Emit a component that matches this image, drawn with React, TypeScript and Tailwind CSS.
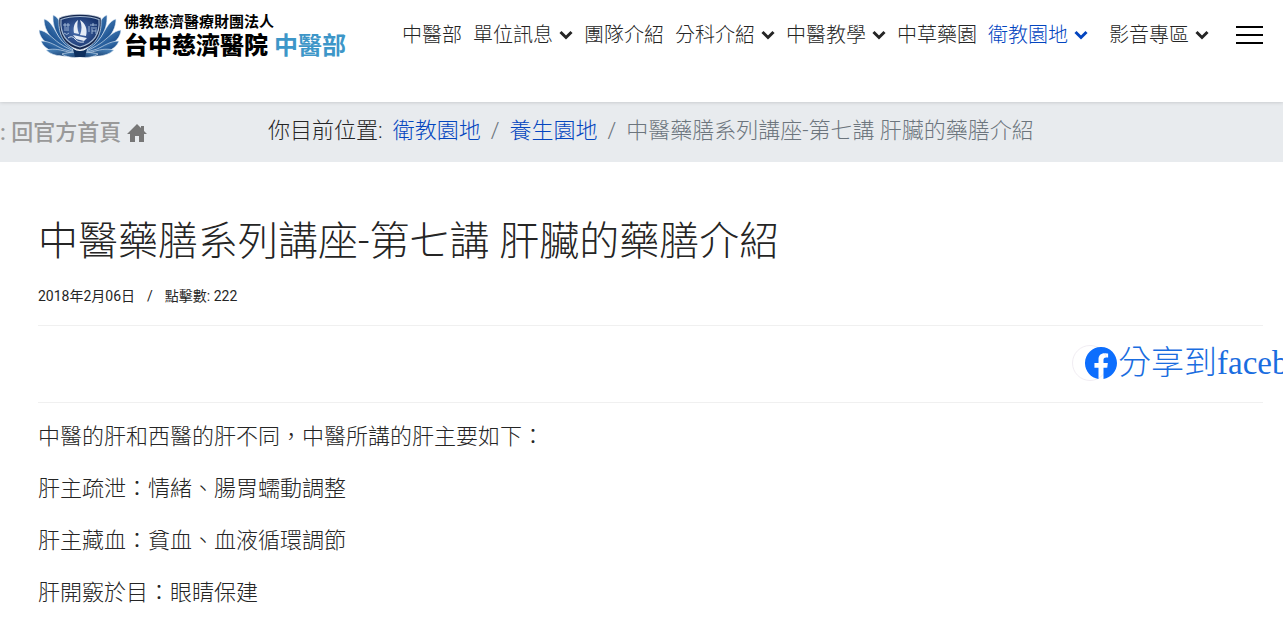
import { BsFacebook } from "react-icons/bs";

const navItems = [
  { label: "中醫部" },
  { label: "單位訊息", menu: true },
  { label: "團隊介紹" },
  { label: "分科介紹", menu: true },
  { label: "中醫教學", menu: true },
  { label: "中草藥園" },
  { label: "衛教園地", menu: true, active: true },
  { label: "影音專區", menu: true, last: true },
];

const paragraphs = [
  "中醫的肝和西醫的肝不同，中醫所講的肝主要如下：",
  "肝主疏泄：情緒、腸胃蠕動調整",
  "肝主藏血：貧血、血液循環調節",
  "肝開竅於目：眼睛保建",
];

function Chevron() {
  return (
    <svg viewBox="0 0 14 14" className="size-[14px]" fill="none" stroke="currentColor" strokeWidth="3" aria-hidden="true">
      <path d="M1.500 4 L7 9.500 L12.500 4" />
    </svg>
  );
}

function Petals() {
  return (
    <g stroke="#e4eef8" strokeWidth="0.6">
      <path d="M34 40 C24 33 13 20 14 3 C21 6 23 14 23 22 C26 29 31 34 36 38Z" fill="url(#petal)" />
      <path d="M35 40 C20 35 5 23 5 7 C12 9 15 17 20 25 C24 31 30 36 36 39Z" fill="url(#petal)" />
      <path d="M36 41 C20 40 1 32 0 18 C8 19 13 26 20 31 C26 35 32 38 37 40Z" fill="url(#petal)" />
      <path d="M38 42 C24 44 6 40 2 29 C11 29 17 34 24 37 C30 39 35 40 39 41Z" fill="url(#petal)" />
      <path d="M41 42 C31 45 15 46 7 38 C16 36 22 38 29 40 C34 41 38 41 41 42Z" fill="url(#petalDark)" />
      <path d="M41 45 C34 46 27 45 23 42 C30 40 37 40 41 41Z" fill="url(#petalDark)" />
    </g>
  );
}

function Emblem() {
  return (
    <svg viewBox="0 0 82 46" className="h-[46px] w-[82px] shrink-0" aria-hidden="true">
      <defs>
        <linearGradient id="petal" x1="0" y1="1" x2="0.8" y2="0.2">
          <stop offset="0" stopColor="#123a72" />
          <stop offset="0.5" stopColor="#245a98" />
          <stop offset="1" stopColor="#5b94c8" />
        </linearGradient>
        <linearGradient id="petalDark" x1="0" y1="0" x2="1" y2="1">
          <stop offset="0" stopColor="#4f8cc4" />
          <stop offset="1" stopColor="#0e2f5e" />
        </linearGradient>
        <radialGradient id="shield" cx="0.45" cy="0.5" r="0.6">
          <stop offset="0" stopColor="#4a70b0" />
          <stop offset="1" stopColor="#15316a" />
        </radialGradient>
      </defs>
      <Petals />
      <g transform="translate(82 0) scale(-1 1)">
        <Petals />
      </g>
      <path d="M34 37 Q41 41 48 37 L46 45 H36Z" fill="#0e2f5e" />
      <path d="M20 6 C30 1 52 1 62 6 C63 20 59 34 41 38 C23 34 19 20 20 6Z" fill="#14264d" stroke="#e4eef8" strokeWidth="0.7" />
      <path d="M22 7.500 C32 3.500 50 3.500 60 7.500 C61 20 56 31 41 35 C26 31 21 20 22 7.500Z" fill="url(#shield)" stroke="#a3b8d2" strokeWidth="1.200" />
      <path d="M39 8 C35 11 34 16 35 21 L40 22 C38 17 38 12 39 8Z M41 8 C46 11 49 17 47 24 L41 23 C43 18 43 13 41 8Z M34 23 L48 26 L45 29 L37 27Z" fill="#e6edf6" />
      <path d="M29 26 Q33 23 36 27 T45 30" fill="none" stroke="#cfdded" strokeWidth="1" />
      <path d="M24 13h7M26 11v4M29 11v4M25 16h5M25 18h5M25 21q3 3 5 0M51 13h7M54 11v3M52 16h6M53 17v5M57 17v5M53 19h4M50 14v6" fill="none" stroke="#b5cbe5" strokeWidth="0.8" />
    </svg>
  );
}

export default function App() {
  return (
    <div className="min-h-screen overflow-hidden bg-white font-['Roboto','Noto_Sans_CJK_TC',sans-serif] font-light text-[#252525]">
      <header className="relative flex h-[102px] items-start justify-between pl-[39px] pr-5 shadow-[0_0_4px_rgba(0,0,0,0.2)]">
        <a href="#" className="flex items-start gap-[3px] whitespace-nowrap pt-3">
          <Emblem />
          <span className="flex flex-col font-bold text-black">
            <span className="text-[15px] leading-5">佛教慈濟醫療財團法人</span>
            <span className="flex gap-[6px] text-2xl leading-7">
              <span className="font-black">台中慈濟醫院</span>
              <span className="text-[#3d96c8]">中醫部</span>
            </span>
          </span>
        </a>
        <div className="flex items-center gap-[27px] whitespace-nowrap pt-[21px]">
          <nav className="flex items-center gap-[11px] text-xl leading-7">
            {navItems.map((item) => (
              <a
                key={item.label}
                href="#"
                className={`flex items-center gap-[6px] ${item.active ? "text-[#0345bf]" : ""} ${item.last ? "pl-[10px]" : ""}`}
              >
                {item.label}
                {item.menu && <Chevron />}
              </a>
            ))}
          </nav>
          <button type="button" aria-label="Menu" className="flex w-[27px] flex-col gap-[6px]">
            <span className="h-[2px] w-full bg-black" />
            <span className="h-[2px] w-full bg-black" />
            <span className="h-[2px] w-full bg-black" />
          </button>
        </div>
      </header>

      <div className="flex h-[60px] items-center whitespace-nowrap bg-[#e8ebee] pt-[2px] text-[22px] leading-8">
        <a href="#" className="flex w-[268px] shrink-0 items-center gap-[6px] font-medium text-[#999]">
          <span>: 回官方首頁</span>
          <svg viewBox="0 0 20 20" className="size-5 fill-[#777]" aria-hidden="true">
            <path d="M10 1 L14 5 V3 H17 V8 L20 11 H17 V19 H12 V13 H8 V19 H3 V11 H0Z" />
          </svg>
        </a>
        <nav aria-label="Breadcrumb" className="flex gap-[10px] pb-1">
          <span>你目前位置:</span>
          <a href="#" className="text-[#0345bf]">衛教園地</a>
          <span className="text-[#6c757d]">/</span>
          <a href="#" className="text-[#0345bf]">養生園地</a>
          <span className="text-[#6c757d]">/</span>
          <span className="text-[#6c757d]">中醫藥膳系列講座-第七講 肝臟的藥膳介紹</span>
        </nav>
      </div>

      <main className="pl-[38px] pr-5">
        <h1 className="pt-[54px] text-[40px] leading-[52px]">中醫藥膳系列講座-第七講 肝臟的藥膳介紹</h1>
        <div className="flex gap-3 pb-[19px] pt-[18px] text-sm leading-5 font-normal">
          <span>2018年2月06日</span>
          <span>/</span>
          <span>點擊數: 222</span>
        </div>
        <div className="flex h-[78px] items-center border-y border-[#f0f0f0]">
          <div className="ml-auto w-[191px] pb-[2px]">
            <a href="#" className="flex w-max items-center text-[33px] leading-9 text-[#1a6de0]">
              <span className="flex size-9 shrink-0 items-center rounded-full border border-[#f1edf3] pl-3">
                <BsFacebook className="size-8 shrink-0 text-[#0d6efd]" />
              </span>
              <span className="pl-[10px] font-['Liberation_Serif','Noto_Sans_CJK_TC',serif]">分享到facebook</span>
            </a>
          </div>
        </div>
        <article className="flex flex-col gap-5 pt-[18px] text-[22px] leading-8">
          {paragraphs.map((text) => (
            <p key={text}>{text}</p>
          ))}
        </article>
      </main>
    </div>
  );
}
